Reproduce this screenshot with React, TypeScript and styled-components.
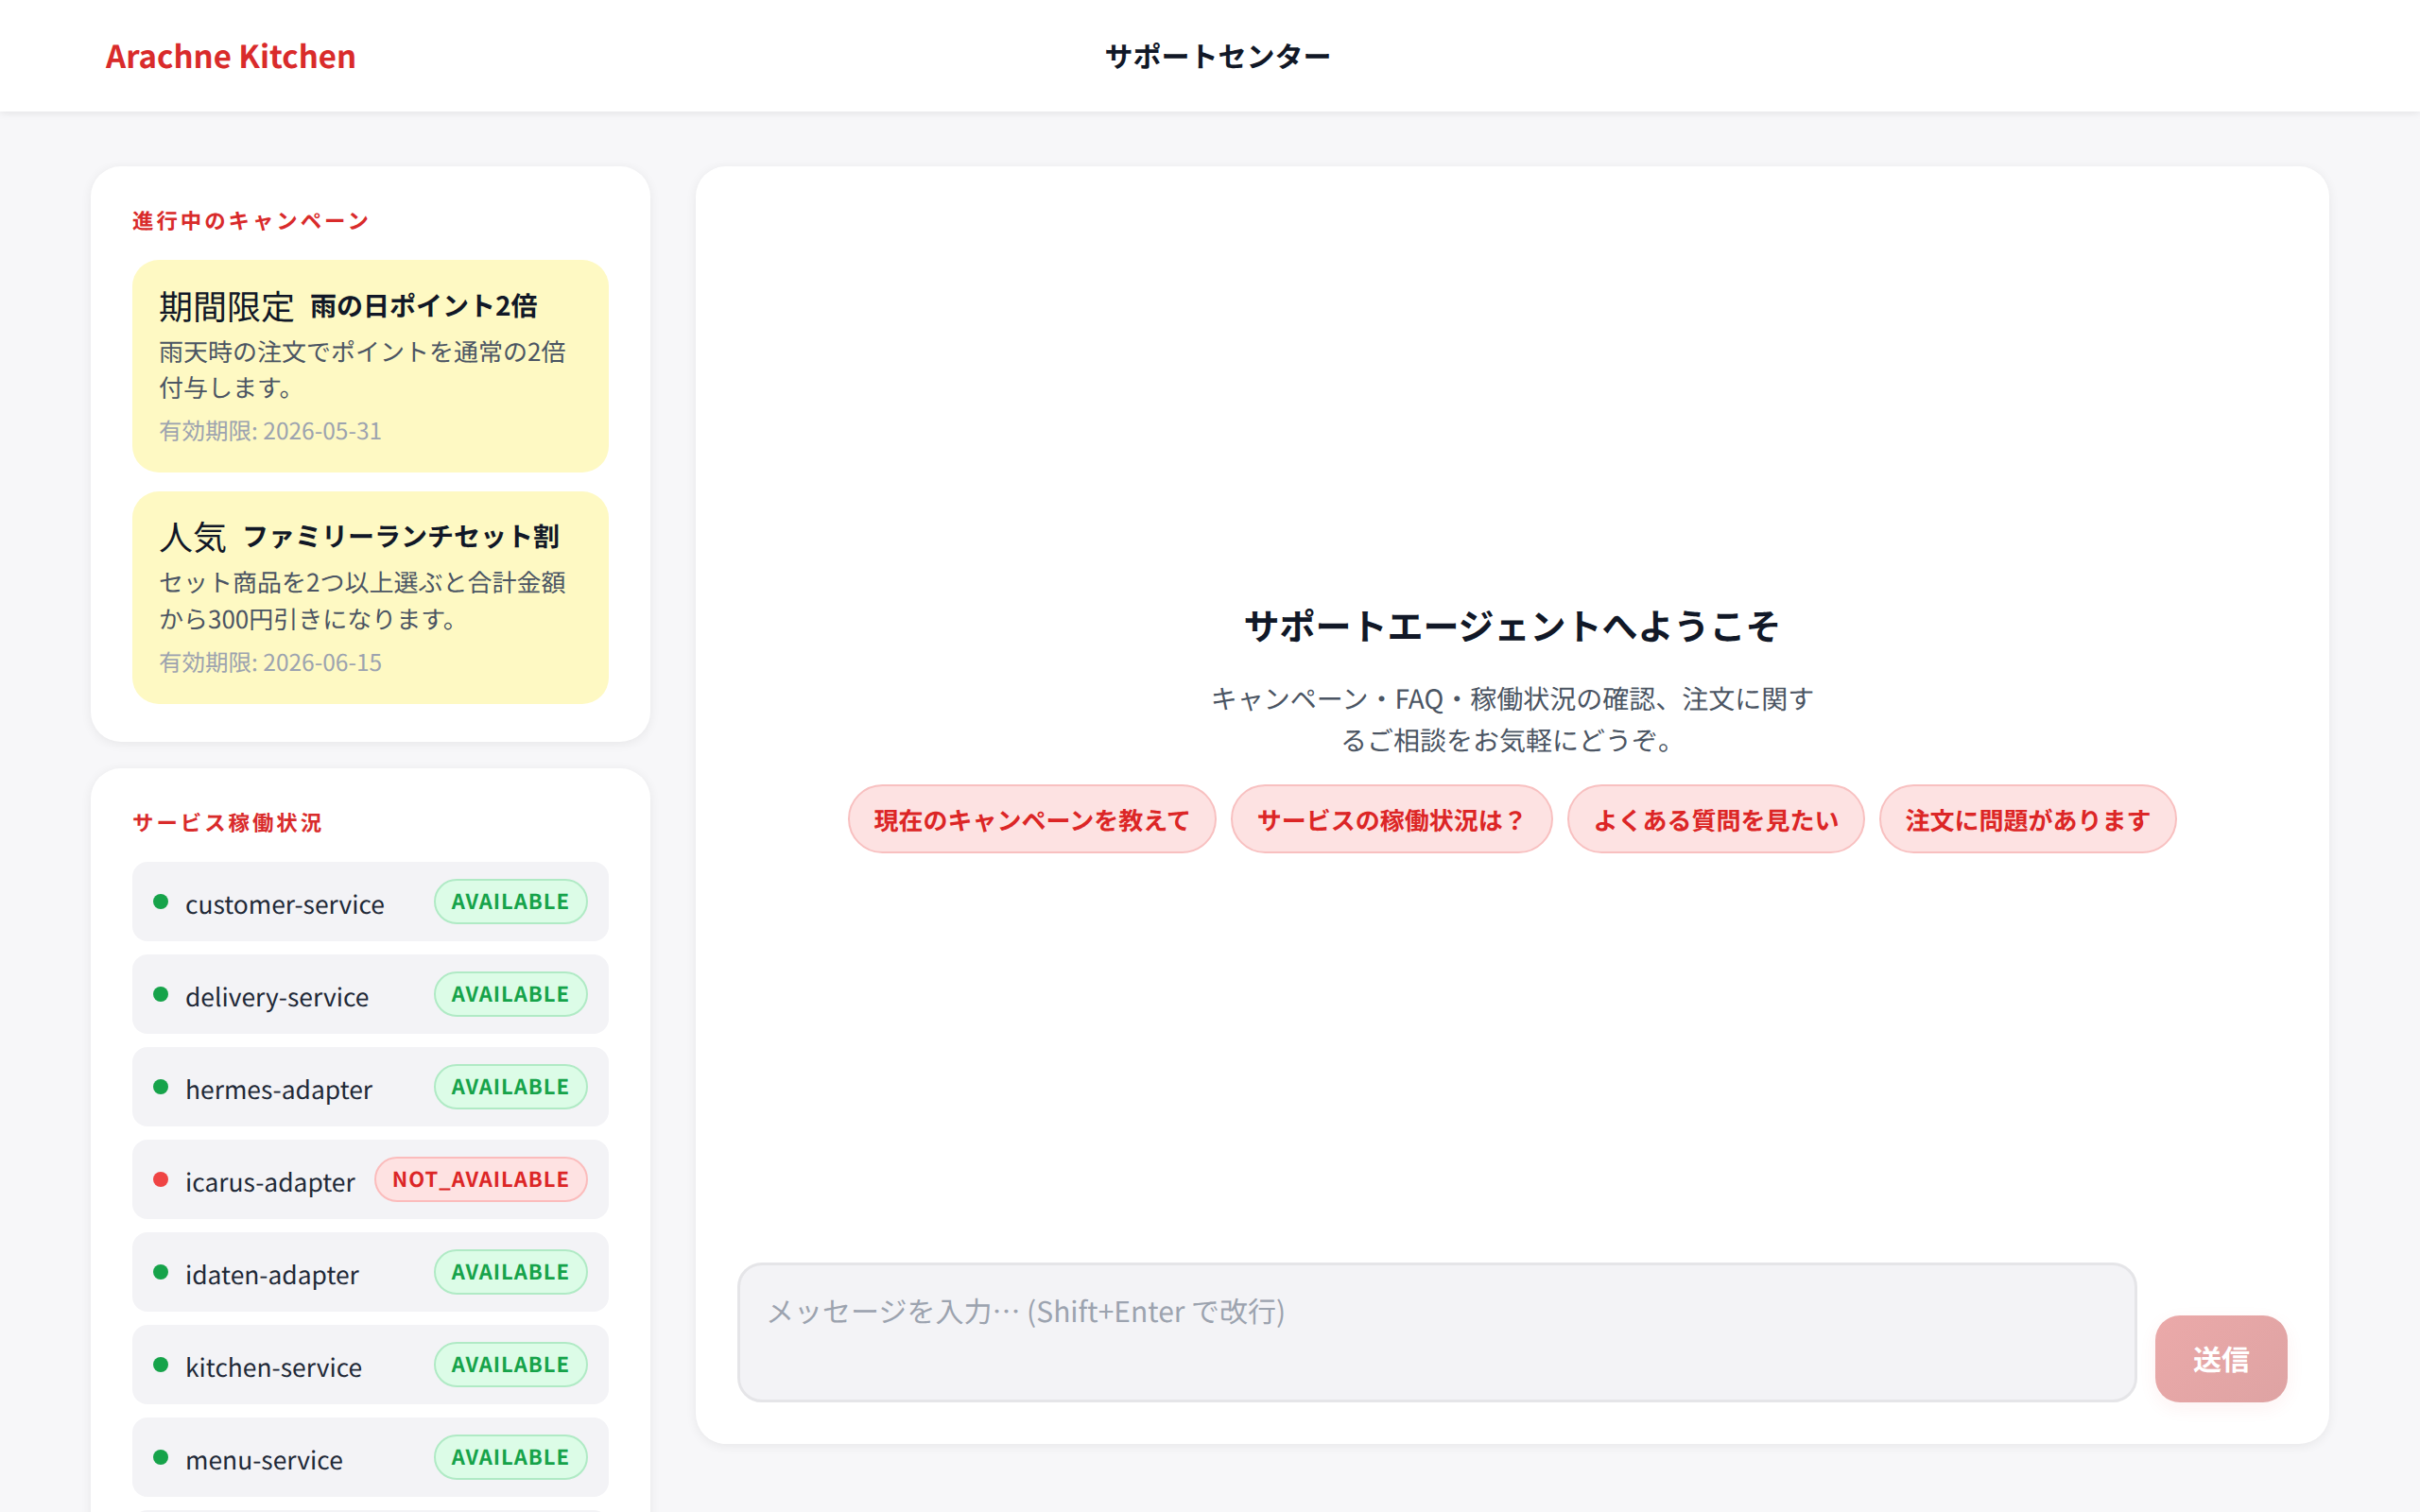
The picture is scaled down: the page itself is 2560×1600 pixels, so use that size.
import React, {FC} from 'react'
import styled, {createGlobalStyle} from 'styled-components'

const GlobalStyle = createGlobalStyle`
    * {
        box-sizing: border-box;
    }

    html, body {
        margin: 0;
        height: 100%;
        overflow: hidden;
        background: #f7f7f9;
        font-family: "Noto Sans CJK JP", "Noto Sans", sans-serif;
        text-rendering: geometricPrecision;
    }
`

const Page = styled.div`
    height: 100vh;
    display: flex;
    flex-direction: column;
    overflow: hidden;
`

const Header = styled.header`
    height: 118px;
    flex-shrink: 0;
    padding: 0 112px 2px;
    display: flex;
    align-items: center;
    justify-content: space-between;
    background: #fff;
    box-shadow: 0 2px 8px rgba(0, 0, 0, 0.08);
`

const Logo = styled.div`
    font-size: 33px;
    font-weight: 700;
    color: #d92b2b;
`

const HeaderTitle = styled.div`
    font-size: 30px;
    font-weight: 700;
    color: #111827;
`

const HeaderSpacer = styled.div`
    width: 248px;
`

const Content = styled.div`
    flex: 1;
    min-height: 0;
    padding: 58px 96px 72px;
    display: flex;
    gap: 48px;
`

const Sidebar = styled.aside`
    width: 592px;
    flex-shrink: 0;
    display: flex;
    flex-direction: column;
    gap: 28px;
`

const Card = styled.section`
    padding: 40px 44px;
    background: #fff;
    border-radius: 32px;
    box-shadow: 0 2px 12px rgba(0, 0, 0, 0.07);
`

const SectionLabel = styled.h2`
    margin: 0 0 25px;
    font-size: 22.4px;
    line-height: 34px;
    font-weight: 700;
    letter-spacing: 3px;
    color: #d92b2b;
`

const CampaignList = styled.div`
    margin-top: 1px;
    display: flex;
    flex-direction: column;
    gap: 20px;
`

const Campaign = styled.div`
    padding: 21.6px 28px 24.4px;
    background: #fef9c3;
    border-radius: 28px;
`

const CampaignHead = styled.div`
    display: flex;
    align-items: center;
    gap: 16px;
    margin-bottom: 4px;
    color: #111827;
`

const CampaignTag = styled.span`
    font-size: 36px;
    line-height: 52px;
    font-weight: 400;
`

const CampaignTitle = styled.span`
    font-size: 28px;
    line-height: 52px;
    font-weight: 700;
`

const CampaignText = styled.p`
    margin: 0;
    font-size: 26px;
    line-height: 38.4px;
    color: #4b5563;
`

const CampaignDate = styled.div`
    margin-top: 8px;
    font-size: 24.5px;
    line-height: 38px;
    color: #9ca3af;
`

const StatusList = styled.div`
    display: flex;
    flex-direction: column;
    gap: 14px;
`

const StatusRow = styled.div`
    height: 84px;
    padding: 0 22px;
    display: flex;
    align-items: center;
    background: #f3f3f6;
    border-radius: 16px;
`

const StatusDot = styled.span<{$ok: boolean}>`
    width: 16px;
    height: 16px;
    flex-shrink: 0;
    border-radius: 50%;
    background: ${props => props.$ok ? '#16a34a' : '#ef4444'};
`

const StatusName = styled.span`
    flex: 1;
    margin-left: 18px;
    padding-top: 4px;
    font-size: 26.4px;
    white-space: nowrap;
    color: #1f2937;
`

const StatusBadge = styled.span<{$ok: boolean}>`
    height: 48px;
    padding: 0 17px 2px;
    display: flex;
    align-items: center;
    font-size: 22px;
    font-weight: 700;
    letter-spacing: 1px;
    border-radius: 24px;
    border: 2px solid ${props => props.$ok ? '#b0eac5' : '#fbbcbc'};
    background: ${props => props.$ok ? '#dcfce7' : '#fee2e2'};
    color: ${props => props.$ok ? '#16a34a' : '#dc2626'};
`

const Main = styled.main`
    flex: 1;
    min-width: 0;
    padding: 44px;
    display: flex;
    flex-direction: column;
    background: #fff;
    border-radius: 32px;
    box-shadow: 0 2px 12px rgba(0, 0, 0, 0.07);
`

const Welcome = styled.div`
    flex: 1;
    min-height: 0;
    padding-bottom: 20px;
    display: flex;
    flex-direction: column;
    align-items: center;
    justify-content: center;
`

const WelcomeTitle = styled.h1`
    margin: 0 0 28px;
    font-size: 38px;
    font-weight: 700;
    line-height: 56px;
    color: #111827;
`

const WelcomeText = styled.p`
    width: 640px;
    margin: 0 0 25px;
    font-size: 28px;
    line-height: 44px;
    text-align: center;
    color: #4b5563;
`

const Chips = styled.div`
    display: flex;
    gap: 15px;
`

const Chip = styled.button`
    height: 73px;
    padding: 2px 25.4px 0;
    font-family: inherit;
    font-size: 26px;
    font-weight: 700;
    text-rendering: inherit;
    color: #dc2626;
    background: #fde2e2;
    border: 2px solid #f8c0c0;
    border-radius: 37px;
`

const InputRow = styled.div`
    display: flex;
    align-items: flex-end;
    gap: 19px;
`

const MessageInput = styled.textarea`
    flex: 1;
    height: 148px;
    padding: 25px 27px;
    font-family: inherit;
    font-size: 30px;
    line-height: 44px;
    text-rendering: inherit;
    resize: none;
    outline: none;
    background: #f3f3f6;
    border: 3px solid #e5e5e8;
    border-radius: 26px;

    &::placeholder {
        color: #9ca3af;
    }
`

const SendButton = styled.button`
    width: 140px;
    height: 92px;
    padding: 0 0 2px;
    font-family: inherit;
    font-size: 30px;
    font-weight: 700;
    text-rendering: inherit;
    color: #fff;
    border: none;
    border-radius: 26px;
    background: linear-gradient(135deg, #eba9a9, #dea3a3);
    box-shadow: 0 6px 20px rgba(220, 38, 38, 0.06);
`

const campaigns = [
    {
        tag: '期間限定',
        title: '雨の日ポイント2倍',
        text: '雨天時の注文でポイントを通常の2倍付与します。',
        date: '有効期限: 2026-05-31',
    },
    {
        tag: '人気',
        title: 'ファミリーランチセット割',
        text: 'セット商品を2つ以上選ぶと合計金額から300円引きになります。',
        date: '有効期限: 2026-06-15',
    },
]

const services = [
    {name: 'customer-service', ok: true},
    {name: 'delivery-service', ok: true},
    {name: 'hermes-adapter', ok: true},
    {name: 'icarus-adapter', ok: false},
    {name: 'idaten-adapter', ok: true},
    {name: 'kitchen-service', ok: true},
    {name: 'menu-service', ok: true},
    {name: 'order-service', ok: true},
]

const chips = [
    '現在のキャンペーンを教えて',
    'サービスの稼働状況は？',
    'よくある質問を見たい',
    '注文に問題があります',
]

const App: FC = () => {
    return <Page>
        <GlobalStyle />
        <Header>
            <Logo>Arachne Kitchen</Logo>
            <HeaderTitle>サポートセンター</HeaderTitle>
            <HeaderSpacer />
        </Header>
        <Content>
            <Sidebar>
                <Card>
                    <SectionLabel>進行中のキャンペーン</SectionLabel>
                    <CampaignList>
                        {campaigns.map(item => (
                            <Campaign key={item.title}>
                                <CampaignHead>
                                    <CampaignTag>{item.tag}</CampaignTag>
                                    <CampaignTitle>{item.title}</CampaignTitle>
                                </CampaignHead>
                                <CampaignText>{item.text}</CampaignText>
                                <CampaignDate>{item.date}</CampaignDate>
                            </Campaign>
                        ))}
                    </CampaignList>
                </Card>
                <Card>
                    <SectionLabel>サービス稼働状況</SectionLabel>
                    <StatusList>
                        {services.map(item => (
                            <StatusRow key={item.name}>
                                <StatusDot $ok={item.ok} />
                                <StatusName>{item.name}</StatusName>
                                <StatusBadge $ok={item.ok}>
                                    {item.ok ? 'AVAILABLE' : 'NOT_AVAILABLE'}
                                </StatusBadge>
                            </StatusRow>
                        ))}
                    </StatusList>
                </Card>
            </Sidebar>
            <Main>
                <Welcome>
                    <WelcomeTitle>サポートエージェントへようこそ</WelcomeTitle>
                    <WelcomeText>キャンペーン・FAQ・稼働状況の確認、注文に関するご相談をお気軽にどうぞ。</WelcomeText>
                    <Chips>
                        {chips.map(chip => <Chip key={chip}>{chip}</Chip>)}
                    </Chips>
                </Welcome>
                <InputRow>
                    <MessageInput placeholder="メッセージを入力… (Shift+Enter で改行)" />
                    <SendButton>送信</SendButton>
                </InputRow>
            </Main>
        </Content>
    </Page>
}

export default App
